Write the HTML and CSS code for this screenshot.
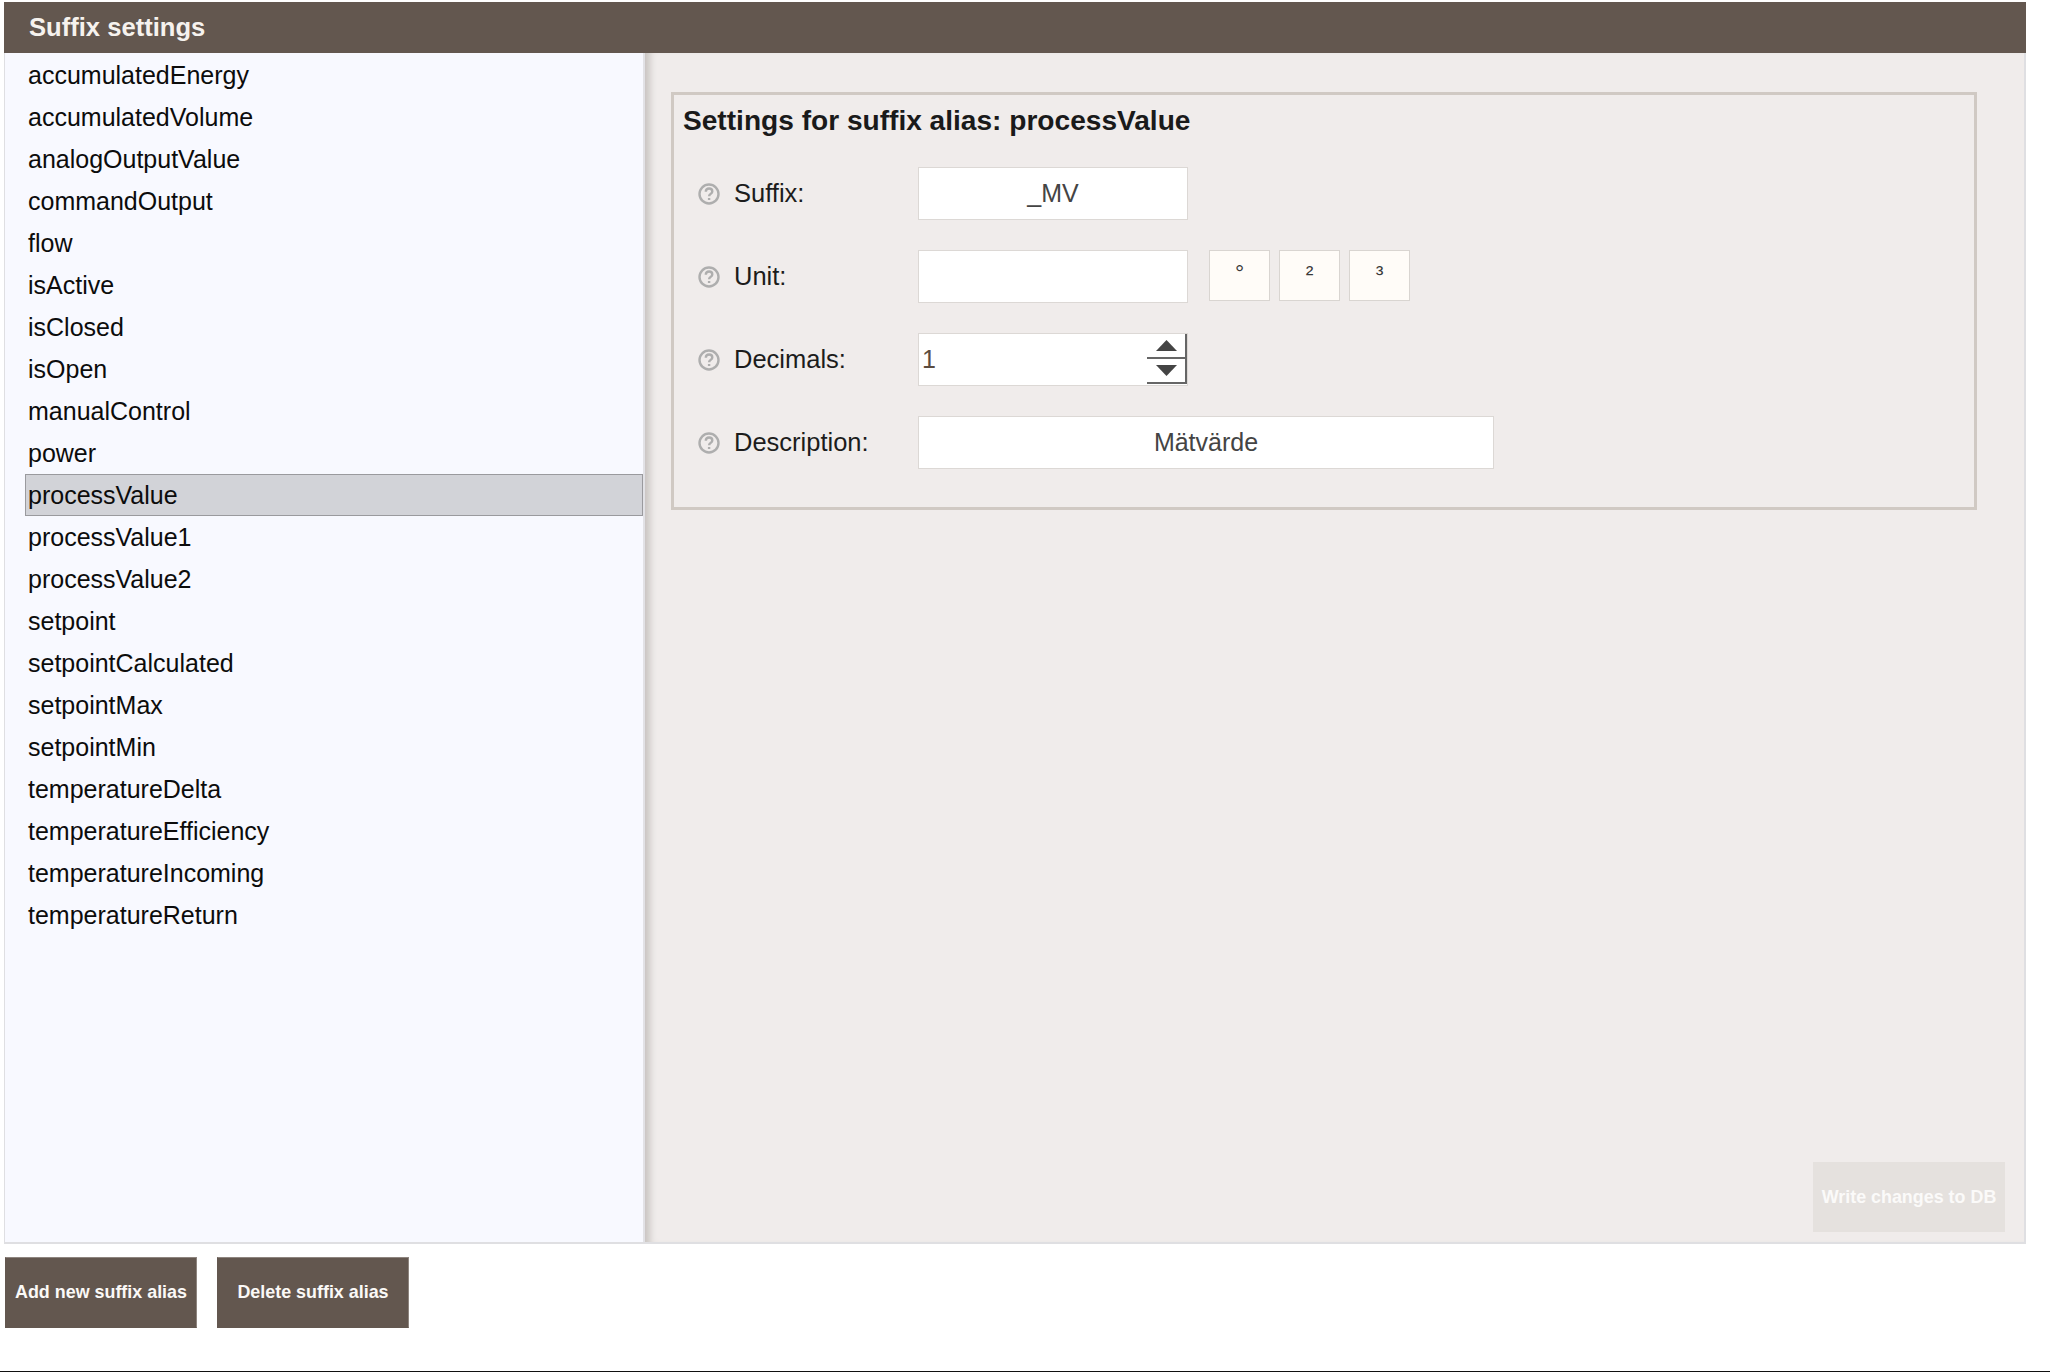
FILE: index.html
```html
<!DOCTYPE html>
<html lang="en">
<head>
    <meta charset="UTF-8">
    <title>Suffix settings</title>
    <link rel="stylesheet" href="styles.css">
</head>
<body>
    <div class="window">
        <div class="title-bar">Suffix settings</div>
        <div class="main">
            <ul class="alias-list">
                <li>accumulatedEnergy</li>
                <li>accumulatedVolume</li>
                <li>analogOutputValue</li>
                <li>commandOutput</li>
                <li>flow</li>
                <li>isActive</li>
                <li>isClosed</li>
                <li>isOpen</li>
                <li>manualControl</li>
                <li>power</li>
                <li class="selected">processValue</li>
                <li>processValue1</li>
                <li>processValue2</li>
                <li>setpoint</li>
                <li>setpointCalculated</li>
                <li>setpointMax</li>
                <li>setpointMin</li>
                <li>temperatureDelta</li>
                <li>temperatureEfficiency</li>
                <li>temperatureIncoming</li>
                <li>temperatureReturn</li>
            </ul>
            <div class="settings-pane">
                <div class="settings-box">
                    <h2>Settings for suffix alias: processValue</h2>
                    <div class="row">
                        <svg class="help" viewBox="0 0 22 22"><circle cx="11" cy="11" r="9.5"/><path d="M7.8 8.8c0-2.1 1.5-3.3 3.3-3.3s3.2 1.2 3.2 2.9c0 2.5-3.2 2.5-3.2 4.9"/><path d="M11.1 15v2"/></svg>
                        <label>Suffix:</label>
                        <input class="field" type="text" value="_MV">
                    </div>
                    <div class="row">
                        <svg class="help" viewBox="0 0 22 22"><circle cx="11" cy="11" r="9.5"/><path d="M7.8 8.8c0-2.1 1.5-3.3 3.3-3.3s3.2 1.2 3.2 2.9c0 2.5-3.2 2.5-3.2 4.9"/><path d="M11.1 15v2"/></svg>
                        <label>Unit:</label>
                        <input class="field" type="text" value="">
                        <div class="unit-buttons">
                            <button>°</button>
                            <button>²</button>
                            <button>³</button>
                        </div>
                    </div>
                    <div class="row">
                        <svg class="help" viewBox="0 0 22 22"><circle cx="11" cy="11" r="9.5"/><path d="M7.8 8.8c0-2.1 1.5-3.3 3.3-3.3s3.2 1.2 3.2 2.9c0 2.5-3.2 2.5-3.2 4.9"/><path d="M11.1 15v2"/></svg>
                        <label>Decimals:</label>
                        <div class="number-field">
                            <input type="text" value="1">
                            <div class="spin">
                                <button><svg viewBox="0 0 21 11"><polygon points="10.5,0 21,11 0,11"/></svg></button>
                                <button><svg viewBox="0 0 21 11"><polygon points="0,0 21,0 10.5,11"/></svg></button>
                            </div>
                        </div>
                    </div>
                    <div class="row">
                        <svg class="help" viewBox="0 0 22 22"><circle cx="11" cy="11" r="9.5"/><path d="M7.8 8.8c0-2.1 1.5-3.3 3.3-3.3s3.2 1.2 3.2 2.9c0 2.5-3.2 2.5-3.2 4.9"/><path d="M11.1 15v2"/></svg>
                        <label>Description:</label>
                        <input class="field wide" type="text" value="Mätvärde">
                    </div>
                </div>
                <button class="action write" disabled>Write changes to DB</button>
            </div>
        </div>
    </div>
    <div class="actions">
        <button class="action">Add new suffix alias</button>
        <button class="action">Delete suffix alias</button>
    </div>
    <div class="page-end"></div>
</body>
</html>
```

FILE: styles.css
```css
html, body {
    height: 100%;
}
body {
    margin: 0;
    padding-top: 2px;
    box-sizing: border-box;
    display: flex;
    flex-direction: column;
    background: #fff;
    color: #111;
    font-family: "Liberation Sans", Arial, sans-serif;
    font-size: 25px;
    overflow: hidden;
}
.window {
    margin: 0 24px 0 4px;
}
.title-bar {
    height: 51px;
    box-sizing: border-box;
    padding-left: 25px;
    background: #63574f;
    color: #f6f2ee;
    font-size: 25.6px;
    font-weight: bold;
    line-height: 50px;
}
.main {
    display: flex;
    height: 1191px;
    box-sizing: border-box;
    border: solid #dfdfe2;
    border-width: 0 2px 2px 1px;
}

/* alias list */
.alias-list {
    width: 640px;
    flex: none;
    box-sizing: border-box;
    margin: 0;
    padding: 1px 0 0 20px;
    list-style: none;
    background: #f8f9ff;
    border-right: 2px solid #e2e2e6;
}
.alias-list li {
    height: 42px;
    box-sizing: border-box;
    padding-left: 3px;
    line-height: 42px;
    color: #0c0c0c;
}
.alias-list li.selected {
    border: 1px solid #9a9a9e;
    padding-left: 2px;
    line-height: 40px;
    background: #d2d3d8;
}

/* right side */
.settings-pane {
    flex: 1;
    display: flex;
    flex-direction: column;
    justify-content: space-between;
    background: #f0eceb;
    box-shadow: inset 10px 0 7px -5px #c9c5c2;
}
.settings-box {
    margin: 39px 47px 0 26px;
    padding: 10px 0 38px 9px;
    border: 3px solid #d0c9c3;
}
.settings-box h2 {
    margin: 0 0 30px;
    font-size: 28.1px;
    line-height: 32px;
    color: #1a1a1a;
}
.row {
    display: flex;
    align-items: center;
    height: 53px;
    margin: 0 0 30px 15px;
}
.row:last-child {
    margin-bottom: 0;
}
.help {
    width: 22px;
    height: 22px;
    flex: none;
    margin-right: 14px;
    fill: none;
    stroke: #aeaeae;
    stroke-width: 2.4;
}
.row label {
    width: 184px;
    flex: none;
    font-size: 25.5px;
    color: #1c1c1c;
}
.field {
    width: 270px;
    height: 53px;
    box-sizing: border-box;
    border: 1px solid #dcd8d5;
    padding: 0;
    background: #fff;
    color: #444;
    font: inherit;
    text-align: center;
}
.field.wide {
    width: 576px;
}
.unit-buttons {
    display: flex;
    gap: 9px;
    align-self: flex-start;
    margin-left: 21px;
}
.unit-buttons button {
    width: 61px;
    height: 51px;
    padding: 0 0 4px;
    border: 1px solid #d9d5d1;
    background: #fffcf8;
    color: #3a3a3a;
    font-family: inherit;
    font-size: 23px;
}
.number-field {
    display: flex;
    width: 270px;
    height: 53px;
    box-sizing: border-box;
    border: 1px solid #dcd8d5;
    background: #fff;
}
.number-field input {
    flex: 1;
    min-width: 0;
    border: 0;
    padding: 0 0 0 3px;
    background: none;
    color: #5b4c40;
    font: inherit;
}
.spin {
    display: flex;
    flex-direction: column;
    width: 40px;
    height: 50px;
}
.spin button {
    flex: 1;
    display: flex;
    align-items: center;
    justify-content: center;
    padding: 0;
    border: solid #666;
    border-width: 0 2px 2px 0;
    background: #fff;
}
.spin svg {
    width: 21px;
    height: 11px;
    fill: #444;
}

/* buttons */
.action {
    width: 192px;
    height: 71px;
    padding: 0;
    border: 1px solid #63574f;
    border-top-color: #8e857f;
    border-right-color: #8e857f;
    background: #63574f;
    color: #fbf9f7;
    font-family: inherit;
    font-size: 17.9px;
    font-weight: bold;
}
.action.write {
    height: 70px;
    flex: none;
    align-self: flex-end;
    margin: 0 19px 10px 0;
    border: 0;
    background: #e5e1de;
    color: #fbfaf9;
}
.actions {
    display: flex;
    gap: 20px;
    margin: 13px 0 0 5px;
}
.page-end {
    margin-top: auto;
    border-top: 1px solid #111;
}
```
